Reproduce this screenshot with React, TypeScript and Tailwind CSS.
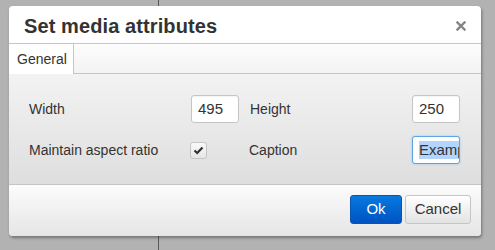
import React from "react";

const font = { fontFamily: '"Liberation Sans", Arial, sans-serif' };

function Field({ value, focused }: { value: string; focused?: boolean }) {
  return (
    <div
      className={
        "w-[48px] h-[28px] shrink-0 rounded-[3px] bg-white flex items-center overflow-hidden pl-[6px] text-[15px] text-[#333] " +
        (focused
          ? "border border-[#59a5e5] shadow-[0_0_2px_#8ec3f0]"
          : "border border-[#c5c5c5] shadow-[inset_0_1px_1px_rgba(0,0,0,0.05)]")
      }
    >
      {focused ? <span className="bg-[#b3d4fc] whitespace-nowrap leading-[18px]">{value}</span> : value}
    </div>
  );
}

export default function App() {
  return (
    <div className="relative w-[495px] h-[250px] bg-[#b2b2b2] overflow-hidden" style={font}>
      <div className="absolute left-[158px] top-0 w-px h-full bg-[#5a5a5a]" />
      <div className="absolute left-[9px] top-[6px] w-[472px] h-[230px] rounded-[4px] bg-white shadow-[1px_2px_3px_rgba(0,0,0,0.35)] flex flex-col overflow-hidden">
        <div className="h-[38px] shrink-0 flex items-center justify-between pl-[15px] pr-[15px] pt-[3px] border-b border-[#c5c5c5]">
          <span className="text-[20px] font-bold text-[#333] tracking-[0.1px]">Set media attributes</span>
          <svg width="10" height="10" viewBox="0 0 10 10">
            <path d="M1.5 1.5 L8.5 8.5 M8.5 1.5 L1.5 8.5" stroke="#858585" strokeWidth="2.4" strokeLinecap="square" />
          </svg>
        </div>
        <div className="h-[30px] shrink-0 flex bg-gradient-to-b from-[#fdfdfd] to-[#f3f3f3] border-b border-[#c5c5c5]">
          <div className="w-[65px] bg-white border-r border-[#c5c5c5] flex items-center pl-[8px] text-[14px] text-[#333] -mb-px">
            General
          </div>
        </div>
        <div className="h-[111px] shrink-0 bg-gradient-to-b from-[#f3f3f3] to-[#dedede] border-b border-[#c5c5c5] relative text-[14px] text-[#333]">
          <div className="absolute left-[20px] top-[21px] flex items-center">
            <span className="w-[162px] shrink-0">Width</span>
            <Field value="495" />
            <span className="w-[173px] shrink-0 pl-[11px]">Height</span>
            <Field value="250" />
          </div>
          <div className="absolute left-[20px] top-[61px] flex items-center">
            <span className="w-[161px] shrink-0">Maintain aspect ratio</span>
            <div className="w-[48px] h-[30px] shrink-0 flex items-center">
              <div className="w-[17px] h-[17px] rounded-[3px] border border-[#c5c5c5] bg-gradient-to-b from-[#fafafa] to-[#e6e6e6] flex items-center justify-center">
                <svg width="11" height="9" viewBox="0 0 11 9">
                  <path d="M1.5 4.5 L4.2 7 L9.5 1.5" stroke="#333" strokeWidth="2.2" fill="none" />
                </svg>
              </div>
            </div>
            <span className="w-[174px] shrink-0 pl-[11px]">Caption</span>
            <div className="h-[30px] flex items-center">
              <Field value="Example" focused />
            </div>
          </div>
        </div>
        <div className="flex-1 bg-gradient-to-b from-[#fcfcfc] to-[#e5e5e5] flex items-start justify-end gap-[3px] pt-[10px] pr-[10px]">
          <button className="w-[52px] h-[29px] rounded-[3px] bg-gradient-to-b from-[#0a79de] to-[#0053c3] border border-[#0a55b0] text-white text-[15px]">
            Ok
          </button>
          <button className="w-[66px] h-[29px] rounded-[3px] bg-gradient-to-b from-[#ffffff] to-[#e3e3e3] border border-[#c5c5c5] text-[#333] text-[15px]">
            Cancel
          </button>
        </div>
      </div>
    </div>
  );
}
